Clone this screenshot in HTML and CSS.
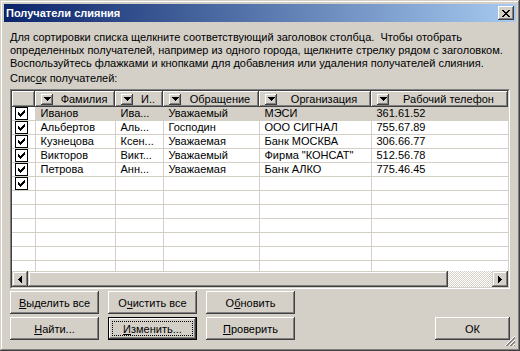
FILE: index.html
```html
<!DOCTYPE html>
<html>
<head>
    <meta charset="UTF-8">
    <title>Получатели слияния</title>
    <link rel="stylesheet" href="styles.css">
</head>
<body>
    <svg class="defs" width="0" height="0">
        <symbol id="check" viewBox="0 0 7 7"><path d="M0 2h1v3H0z M1 3h1v3H1z M2 4h1v3H2z M3 3h1v3H3z M4 2h1v3H4z M5 1h1v3H5z M6 0h1v3H6z"/></symbol>
        <symbol id="down" viewBox="0 0 7 4"><path d="M0 0h7v1H0z M1 1h5v1H1z M2 2h3v1H2z M3 3h1v1H3z"/></symbol>
        <symbol id="left" viewBox="0 0 4 7"><path d="M3 0h1v7H3z M2 1h1v5H2z M1 2h1v3H1z M0 3h1v1H0z"/></symbol>
        <symbol id="right" viewBox="0 0 4 7"><path d="M0 0h1v7H0z M1 1h1v5H1z M2 2h1v3H2z M3 3h1v1H3z"/></symbol>
    </svg>

    <div class="window">
        <div class="titlebar">
            <span class="title">Получатели слияния</span>
            <button class="close">
                <svg width="8" height="7" viewBox="0 0 8 7"><path d="M0 0h2v1H0z M6 0h2v1H6z M1 1h2v1H1z M5 1h2v1H5z M2 2h4v1H2z M3 3h2v1H3z M2 4h4v1H2z M1 5h2v1H1z M5 5h2v1H5z M0 6h2v1H0z M6 6h2v1H6z"/></svg>
            </button>
        </div>

        <div class="client">
            <p class="hint">Для сортировки списка щелкните соответствующий заголовок столбца.&nbsp; Чтобы отобрать<br>определенных получателей, например из одного города, щелкните стрелку рядом с заголовком.<br>Воспользуйтесь флажками и кнопками для добавления или удаления получателей слияния.</p>
            <div class="label">Спис<u>о</u>к получателей:</div>

            <div class="list">
                <div class="list-inner">
                    <div class="grid-wrap">
                        <table class="grid">
                            <colgroup>
                                <col style="width:23px">
                                <col style="width:80px">
                                <col style="width:48px">
                                <col style="width:96px">
                                <col style="width:112px">
                                <col style="width:137px">
                            </colgroup>
                            <thead>
                                <tr>
                                    <th><div class="hcell"></div></th>
                                    <th><div class="hcell"><span class="drop"><svg><use href="#down"/></svg></span><span class="htext">Фамилия</span></div></th>
                                    <th><div class="hcell"><span class="drop"><svg><use href="#down"/></svg></span><span class="htext">И..</span></div></th>
                                    <th><div class="hcell"><span class="drop"><svg><use href="#down"/></svg></span><span class="htext">Обращение</span></div></th>
                                    <th><div class="hcell"><span class="drop"><svg><use href="#down"/></svg></span><span class="htext">Организация</span></div></th>
                                    <th><div class="hcell"><span class="drop"><svg><use href="#down"/></svg></span><span class="htext">Рабочий телефон</span></div></th>
                                </tr>
                            </thead>
                            <tbody>
                                <tr class="sel">
                                    <td><span class="cb"><svg><use href="#check"/></svg></span></td>
                                    <td>Иванов</td><td>Ива...</td><td>Уважаемый</td><td>МЭСИ</td><td>361.61.52</td>
                                </tr>
                                <tr>
                                    <td><span class="cb"><svg><use href="#check"/></svg></span></td>
                                    <td>Альбертов</td><td>Аль...</td><td>Господин</td><td>ООО СИГНАЛ</td><td>755.67.89</td>
                                </tr>
                                <tr>
                                    <td><span class="cb"><svg><use href="#check"/></svg></span></td>
                                    <td>Кузнецова</td><td>Ксен...</td><td>Уважаемая</td><td>Банк МОСКВА</td><td>306.66.77</td>
                                </tr>
                                <tr>
                                    <td><span class="cb"><svg><use href="#check"/></svg></span></td>
                                    <td>Викторов</td><td>Викт...</td><td>Уважаемый</td><td>Фирма "КОНСАТ"</td><td>512.56.78</td>
                                </tr>
                                <tr>
                                    <td><span class="cb"><svg><use href="#check"/></svg></span></td>
                                    <td>Петрова</td><td>Анн...</td><td>Уважаемая</td><td>Банк АЛКО</td><td>775.46.45</td>
                                </tr>
                                <tr>
                                    <td><span class="cb"><svg><use href="#check"/></svg></span></td>
                                    <td></td><td></td><td></td><td></td><td></td>
                                </tr>
                                <tr><td></td><td></td><td></td><td></td><td></td><td></td></tr>
                                <tr><td></td><td></td><td></td><td></td><td></td><td></td></tr>
                                <tr><td></td><td></td><td></td><td></td><td></td><td></td></tr>
                                <tr><td></td><td></td><td></td><td></td><td></td><td></td></tr>
                                <tr><td></td><td></td><td></td><td></td><td></td><td></td></tr>
                                <tr><td></td><td></td><td></td><td></td><td></td><td></td></tr>
                            </tbody>
                        </table>
                    </div>
                    <div class="hscroll">
                        <span class="sbtn"><svg width="4" height="7"><use href="#left"/></svg></span>
                        <span class="thumb"></span>
                        <span class="track"></span>
                        <span class="sbtn"><svg width="4" height="7"><use href="#right"/></svg></span>
                    </div>
                </div>
            </div>

            <div class="actions">
                <div class="btn-grid">
                    <button class="btn"><u>В</u>ыделить все</button>
                    <button class="btn">О<u>ч</u>истить все</button>
                    <button class="btn">О<u>б</u>новить</button>
                    <button class="btn"><u>Н</u>айти...</button>
                    <button class="btn default"><u>И</u>зменить...</button>
                    <button class="btn"><u>П</u>роверить</button>
                </div>
                <button class="btn ok">ОК</button>
            </div>
        </div>

        <svg class="grip" width="12" height="12" viewBox="0 0 12 12">
            <path d="M11 1L1 11 M11 5L5 11 M11 9L9 11" stroke="#fff" stroke-width="1"/>
            <path d="M11 2L2 11 M11 3L3 11 M11 6L6 11 M11 7L7 11 M11 10L10 11" stroke="#808080" stroke-width="1"/>
        </svg>
    </div>
</body>
</html>
```

FILE: styles.css
```css
body {
    margin: 0;
    background-color: #d4d0c8;
}

.defs {
    position: absolute;
}

.window {
    position: relative;
    width: 520px;
    height: 351px;
    box-sizing: border-box;
    padding: 4px;
    display: flex;
    flex-direction: column;
    background-color: #d4d0c8;
    box-shadow: inset -1px -1px #404040, inset 1px 1px #d4d0c8, inset -2px -2px #808080, inset 2px 2px #fff;
    font-family: "Liberation Sans", Arial, sans-serif;
    font-size: 11px;
    color: #000;
}

.titlebar {
    height: 18px;
    padding: 0 2px;
    display: flex;
    align-items: center;
    justify-content: space-between;
    background: linear-gradient(to right, #0a246a, #a6caf0);
}

.title {
    color: #fff;
    font-weight: bold;
}

.close {
    width: 16px;
    height: 14px;
    padding: 0;
    border: none;
    display: flex;
    align-items: center;
    justify-content: center;
    background-color: #d4d0c8;
    box-shadow: inset -1px -1px #404040, inset 1px 1px #fff, inset -2px -2px #808080;
}

.client {
    flex: 1;
    padding: 9px 6px 0;
    display: flex;
    flex-direction: column;
}

.hint {
    margin: 0;
    line-height: 13px;
    white-space: nowrap;
}

.label {
    margin-top: 2px;
    line-height: 13px;
}

.list {
    margin-top: 4px;
    height: 200px;
    box-sizing: border-box;
    border: 1px solid;
    border-color: #808080 #fff #fff #808080;
}

.list-inner {
    height: 100%;
    box-sizing: border-box;
    border: 1px solid;
    border-color: #404040 #d4d0c8 #d4d0c8 #404040;
    background-color: #fff;
    display: flex;
    flex-direction: column;
}

.grid-wrap {
    flex: 1;
    overflow: hidden;
}

.grid {
    width: 496px;
    table-layout: fixed;
    border-collapse: collapse;
}

.grid th {
    padding: 0;
    font-weight: normal;
}

.hcell {
    height: 16px;
    display: flex;
    align-items: center;
    background-color: #d4d0c8;
    box-shadow: inset -1px -1px #404040, inset 1px 1px #fff, inset -2px -2px #808080;
}

.drop {
    width: 12px;
    height: 11px;
    margin-left: 6px;
    display: flex;
    align-items: center;
    justify-content: center;
    background-color: #d4d0c8;
    box-shadow: inset -1px -1px #404040, inset 1px 1px #fff, inset -2px -2px #808080;
}

.drop svg {
    width: 7px;
    height: 4px;
}

.htext {
    flex: 1;
    text-align: center;
    white-space: nowrap;
    overflow: hidden;
}

.grid td {
    height: 13px;
    padding: 0 0 0 5px;
    line-height: 13px;
    white-space: nowrap;
    overflow: hidden;
    border-right: 1px solid #d4d0c8;
    border-bottom: 1px solid #d4d0c8;
}

.grid td:first-child {
    padding-left: 3px;
}

.sel td {
    background-color: #d4d0c8;
}

.sel td:first-child {
    background-color: #fff;
}

.cb {
    width: 11px;
    height: 11px;
    display: flex;
    align-items: center;
    justify-content: center;
    border: 1px solid #000;
    background-color: #fff;
}

.cb svg {
    width: 7px;
    height: 7px;
}

.hscroll {
    height: 16px;
    display: flex;
}

.sbtn {
    width: 16px;
    height: 16px;
    display: flex;
    align-items: center;
    justify-content: center;
    background-color: #d4d0c8;
    box-shadow: inset -1px -1px #404040, inset 1px 1px #d4d0c8, inset -2px -2px #808080, inset 2px 2px #fff;
}

.thumb {
    width: 420px;
    background-color: #d4d0c8;
    box-shadow: inset -1px -1px #404040, inset 1px 1px #d4d0c8, inset -2px -2px #808080, inset 2px 2px #fff;
}

.track {
    flex: 1;
    background: repeating-conic-gradient(#fff 0 25%, #d4d0c8 0 50%) 0 0 / 2px 2px;
}

.actions {
    margin-top: 2px;
    display: flex;
    justify-content: space-between;
    align-items: flex-end;
}

.btn-grid {
    display: grid;
    grid-template-columns: repeat(3, 89px);
    column-gap: 9px;
    row-gap: 3px;
}

.btn {
    position: relative;
    height: 23px;
    padding: 0;
    border: none;
    font-family: inherit;
    font-size: 11px;
    color: #000;
    background-color: #d4d0c8;
    box-shadow: inset -1px -1px #404040, inset 1px 1px #fff, inset -2px -2px #808080, inset 2px 2px #d4d0c8;
}

.btn.default {
    box-shadow: inset 0 0 0 1px #000, inset -2px -2px #404040, inset 2px 2px #fff, inset -3px -3px #808080;
}

.btn.default::after {
    content: "";
    position: absolute;
    inset: 4px;
    border: 1px dotted #000;
}

.ok {
    width: 75px;
    margin-bottom: 0;
}

.grip {
    position: absolute;
    right: 4px;
    bottom: 4px;
}
```
